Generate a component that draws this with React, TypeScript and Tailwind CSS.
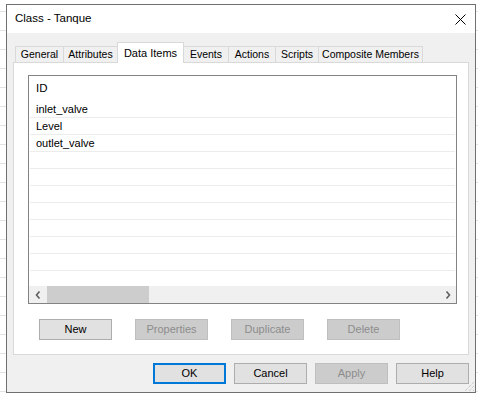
import { FC, ReactNode } from "react"

const tabs = [
  { label: "General", w: 48 },
  { label: "Attributes", w: 54 },
  { label: "Data Items", w: 67 },
  { label: "Events", w: 44 },
  { label: "Actions", w: 47 },
  { label: "Scripts", w: 43 },
  { label: "Composite Members", w: 105 },
]

const activeTab = 2

const items = ["inlet_valve", "Level", "outlet_valve"]

type ButtonProps = {
  children: ReactNode
  disabled?: boolean
  primary?: boolean
}

const DlgButton: FC<ButtonProps> = ({ children, disabled, primary }) => {
  if (disabled) {
    return (
      <div className="w-[73px] h-[21px] flex items-center justify-center bg-[#cccccc] border border-[#bfbfbf] text-[#8c8c8c] text-[11px]">
        {children}
      </div>
    )
  }
  if (primary) {
    return (
      <div className="w-[73px] h-[21px] flex items-center justify-center bg-[#e1e1e1] border-2 border-[#0078d7] text-black text-[11px]">
        {children}
      </div>
    )
  }
  return (
    <div className="w-[73px] h-[21px] flex items-center justify-center bg-[#e1e1e1] border border-[#adadad] text-black text-[11px]">
      {children}
    </div>
  )
}

const Chevron: FC<{ dir: "left" | "right" }> = ({ dir }) => (
  <svg width="6" height="8" viewBox="0 0 6 8">
    <polyline
      points={dir === "left" ? "4.5,0.5 1.5,4 4.5,7.5" : "1.5,0.5 4.5,4 1.5,7.5"}
      fill="none"
      stroke="#606060"
      strokeWidth="1.6"
    />
  </svg>
)

export default function App() {
  return (
    <div className="w-[478px] h-[394px] overflow-hidden bg-white bg-[repeating-linear-gradient(to_bottom,transparent_0px,transparent_11px,#e3e3e3_11px,#e3e3e3_12px,transparent_12px,transparent_19px)] pt-[4px] pl-[6px] font-['Liberation_Sans',Arial,sans-serif]">
      <div className="relative w-[470px] h-[389px] border border-[#707070] bg-[#f0f0f0] flex flex-col">
        {/* title bar */}
        <div className="h-[28px] bg-white flex items-center justify-between pl-[8px] pr-[9px]">
          <span className="text-[11.5px] text-black">Class - Tanque</span>
          <svg width="11" height="11" viewBox="0 0 11 11">
            <path d="M0.5 0.5 L10.5 10.5 M10.5 0.5 L0.5 10.5" stroke="#000" strokeWidth="1" />
          </svg>
        </div>

        <div className="flex flex-col px-[6px] pt-[9px]">
          {/* tabs */}
          <div className="flex items-end h-[20px] pl-[2px]">
            {tabs.map((t, i) =>
              i === activeTab ? (
                <div
                  key={t.label}
                  style={{ width: t.w }}
                  className="relative z-10 h-[21px] -mb-px bg-white border-t border-l border-r border-[#d9d9d9] flex items-start justify-center pt-[2px] text-[11px] text-black"
                >
                  {t.label}
                </div>
              ) : (
                <div
                  key={t.label}
                  style={{ width: t.w }}
                  className={
                    "h-[16px] bg-[#f0f0f0] border-t border-[#d9d9d9] flex items-center justify-center text-[10.5px] text-black " +
                    (i === activeTab + 1 ? "" : "border-l ") +
                    (i === tabs.length - 1 ? "border-r" : "")
                  }
                >
                  {t.label}
                </div>
              )
            )}
          </div>

          {/* panel */}
          <div className="w-[456px] h-[293px] border border-[#d9d9d9] bg-white pl-[14px] pt-[12px] flex flex-col">
            <div className="w-[429px] h-[229px] border border-[#838383] flex flex-col">
              <div className="h-[25px] shrink-0 flex items-center pl-[7px] text-[11.5px] text-black">ID</div>
              <div className="flex-1 overflow-hidden flex flex-col">
                {Array.from({ length: 12 }).map((_, i) => (
                  <div
                    key={i}
                    className="h-[17px] shrink-0 mx-[1px] border-b border-[#ececec] pl-[6px] leading-[16px] text-[11px] text-black"
                  >
                    {items[i] ?? ""}
                  </div>
                ))}
              </div>
              <div className="h-[17px] shrink-0 flex bg-[#f0f0f0]">
                <div className="w-[17px] flex items-center justify-center">
                  <Chevron dir="left" />
                </div>
                <div className="ml-[1px] w-[102px] bg-[#cdcdcd]" />
                <div className="flex-1" />
                <div className="w-[17px] flex items-center justify-center">
                  <Chevron dir="right" />
                </div>
              </div>
            </div>

            <div className="flex gap-[23px] mt-[15px] ml-[11px]">
              <DlgButton>New</DlgButton>
              <DlgButton disabled>Properties</DlgButton>
              <DlgButton disabled>Duplicate</DlgButton>
              <DlgButton disabled>Delete</DlgButton>
            </div>
          </div>

          {/* dialog buttons */}
          <div className="flex gap-[8px] mt-[8px] ml-[140px]">
            <DlgButton primary>OK</DlgButton>
            <DlgButton>Cancel</DlgButton>
            <DlgButton disabled>Apply</DlgButton>
            <DlgButton>Help</DlgButton>
          </div>
        </div>

        {/* size grip */}
        <svg className="absolute right-0 bottom-0" width="12" height="12" viewBox="0 0 12 12">
          <path d="M11 2 L2 11 M11 6 L6 11 M11 10 L10 11" stroke="#b8b8b8" strokeWidth="1" strokeDasharray="1 1" />
        </svg>
      </div>
    </div>
  )
}
